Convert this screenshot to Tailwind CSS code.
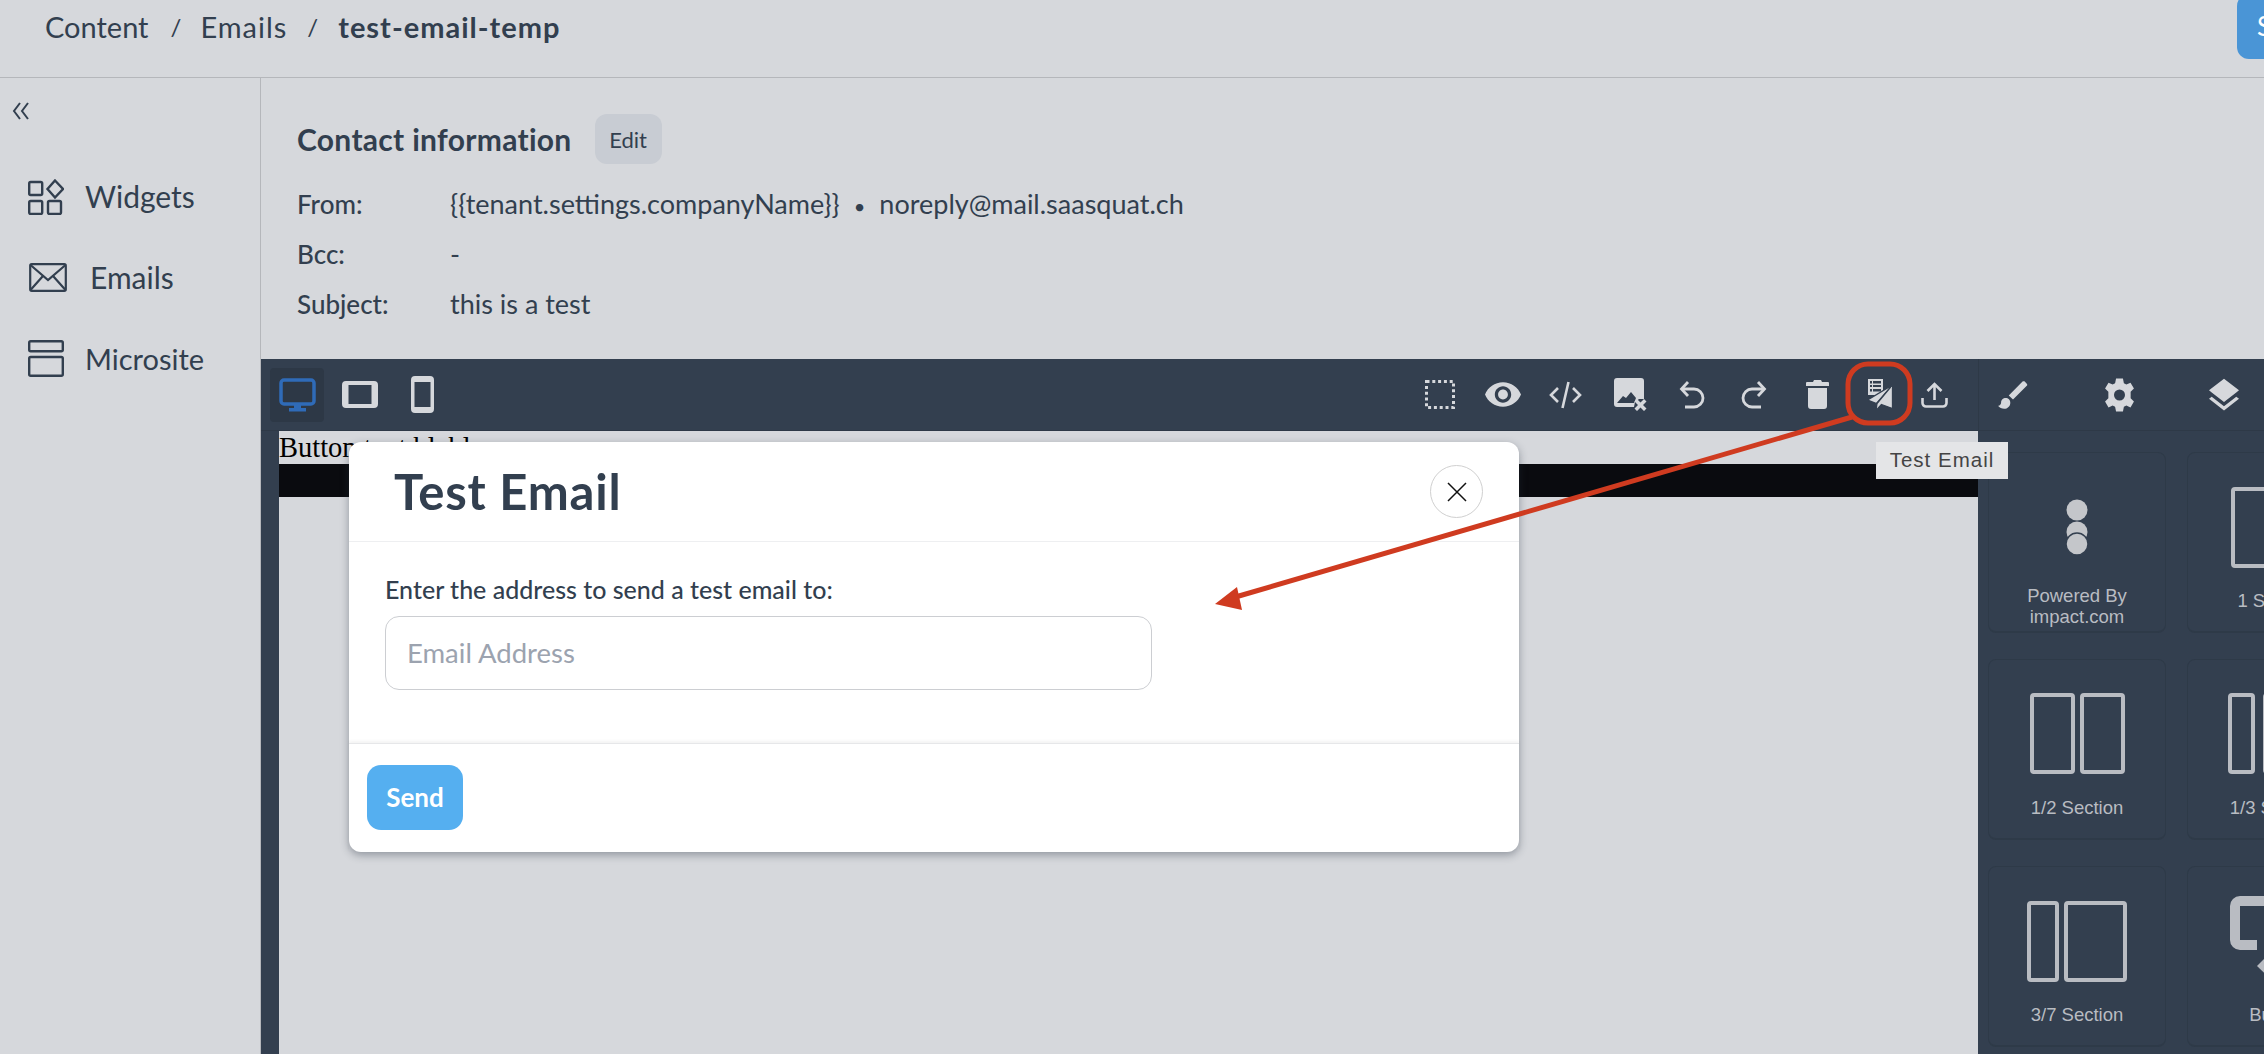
<!DOCTYPE html>
<html lang="en">
<head>
  <meta charset="UTF-8">
  <title>test-email-temp</title>
  <script src="https://cdn.jsdelivr.net/npm/@tailwindcss/browser@4"></script>
</head>
<body class="bg-[#d6d8dc] text-[#323f4f] font-['Lato','Noto_Sans',sans-serif] overflow-hidden">
  <div class="relative w-[2264px] h-[1054px] overflow-hidden">

    <!-- top bar -->
    <header class="h-[78px] border-b border-[#b5b7bb] flex items-start pl-[45px] overflow-hidden">
      <nav class="flex items-center h-[54px] text-[29px]">
        <span>Content</span>
        <span class="ml-[22px] text-[24px]">/</span>
        <span class="ml-[19px] tracking-[1px]">Emails</span>
        <span class="ml-[20px] text-[24px]">/</span>
        <span class="ml-[20px] font-bold tracking-[1px]">test-email-temp</span>
      </nav>
      <button class="ml-auto -mr-[53px] -mt-[6px] h-[65px] w-[80px] shrink-0 rounded-xl bg-[#4a95d6] text-white text-[26px] text-left pl-[20px]">Save</button>
    </header>

    <div class="flex h-[976px]">
      <!-- sidebar -->
      <aside class="w-[261px] shrink-0 border-r border-[#b5b7bb]">
        <svg class="ml-[12px] mt-[24px] w-[18px] h-[18px]" viewBox="0 0 18 18" fill="none" stroke="#323f4f" stroke-width="2"><path d="M8 1 2 9l6 8M16 1l-6 8 6 8"/></svg>
        <ul class="mt-[36px] text-[30px]">
          <li class="flex items-center h-[81px] pl-[28px]">
            <svg class="w-[36px] h-[36px]" viewBox="0 0 36 36" fill="none" stroke="#323f4f" stroke-width="2.4"><rect x="1.2" y="3" width="13" height="13" rx="1.5"/><path d="M27 1.5 35 10l-8 8.5L19.5 10z"/><rect x="1.2" y="22" width="13" height="13" rx="1.5"/><rect x="20" y="22" width="13" height="13" rx="1.5"/></svg>
            <span class="ml-[21px]">Widgets</span>
          </li>
          <li class="flex items-center h-[81px] pl-[29px]">
            <svg class="w-[38px] h-[29px]" viewBox="0 0 38 29" fill="none" stroke="#323f4f" stroke-width="2.2"><rect x="1.2" y="1.2" width="35.6" height="26.6" rx="1.5"/><path d="m1.5 2 17.5 15L36.5 2M1.5 27l12-13.5M36.5 27l-12-13.5"/></svg>
            <span class="ml-[23px]">Emails</span>
          </li>
          <li class="flex items-center h-[81px] pl-[28px]">
            <svg class="w-[36px] h-[37px]" viewBox="0 0 36 37" fill="none" stroke="#323f4f" stroke-width="2.4"><rect x="1.2" y="1.2" width="33.6" height="10" rx="1.5"/><rect x="1.2" y="17" width="33.6" height="18.8" rx="1.5"/></svg>
            <span class="ml-[21px] text-[29px]">Microsite</span>
          </li>
        </ul>
      </aside>

      <main class="flex-1 min-w-0">
        <!-- contact information -->
        <section class="h-[281px] pl-[36px] pt-[36px]">
          <div class="flex items-center h-[50px]">
            <h2 class="text-[30px] font-bold tracking-[0.3px]">Contact information</h2>
            <button class="ml-[23px] w-[67px] h-[50px] rounded-xl bg-[#c8ccd3] text-[22px]">Edit</button>
          </div>
          <dl class="mt-[15px] text-[26px]">
            <div class="flex items-center h-[50px]"><dt class="w-[153px] font-medium">From:</dt><dd class="text-[27px]">{{tenant.settings.companyName}}<span class="mx-[14px] text-[20px]">•</span>noreply@mail.saasquat.ch</dd></div>
            <div class="flex items-center h-[50px]"><dt class="w-[153px] font-medium">Bcc:</dt><dd class="text-[27px]">-</dd></div>
            <div class="flex items-center h-[50px]"><dt class="w-[153px] font-medium">Subject:</dt><dd class="text-[27px]">this is a test</dd></div>
          </dl>
        </section>

        <!-- email editor -->
        <section class="bg-[#333f4f] h-[695px] flex flex-col">
          <div class="h-[72px] shrink-0 flex items-center border-b border-[#2e3947]">
            <div class="ml-[9px] w-[54px] h-[54px] rounded bg-[#2d3846] flex items-center justify-center">
              <svg class="w-[37px] h-[34px]" viewBox="0 0 37 34" fill="none"><rect x="2" y="2" width="33" height="24" rx="3" stroke="#2f6bb8" stroke-width="3.5"/><path d="M15 27h7v3h5v3.5H10V30h5z" fill="#2f6bb8"/></svg>
            </div>
            <svg class="ml-[18px] w-[36px] h-[27px]" viewBox="0 0 36 27" fill="#d6d8dc"><path fill-rule="evenodd" d="M4 0h28a4 4 0 0 1 4 4v19a4 4 0 0 1-4 4H4a4 4 0 0 1-4-4V4a4 4 0 0 1 4-4zM6.500 4v19h23V4z"/></svg>
            <svg class="ml-[33px] w-[23px] h-[37px]" viewBox="0 0 23 37" fill="#d6d8dc"><path fill-rule="evenodd" d="M4 0h15a4 4 0 0 1 4 4v29a4 4 0 0 1-4 4H4a4 4 0 0 1-4-4V4a4 4 0 0 1 4-4zM3.500 6v25h16V6z"/></svg>

            <div class="ml-auto flex items-center mr-[30px]">
              <svg class="w-[30px] h-[29px]" viewBox="0 0 30 29" fill="none" stroke="#d6d8dc" stroke-width="3" stroke-dasharray="3 2.8"><rect x="1.5" y="1.5" width="27" height="26"/></svg>
              <svg class="ml-[30px] w-[36px] h-[25px]" viewBox="1 4.5 22 15" fill="#d6d8dc"><path d="M12 4.5C7 4.5 2.73 7.61 1 12c1.73 4.39 6 7.5 11 7.5s9.27-3.11 11-7.5c-1.73-4.39-6-7.5-11-7.5zM12 17c-2.76 0-5-2.24-5-5s2.24-5 5-5 5 2.24 5 5-2.24 5-5 5zm0-8c-1.66 0-3 1.34-3 3s1.34 3 3 3 3-1.34 3-3-1.34-3-3-3z"/></svg>
              <svg class="ml-[28px] w-[33px] h-[28px]" viewBox="0 0 33 28" fill="none" stroke="#d6d8dc" stroke-width="2.6"><path d="M9 7 2 14l7 7M24 7l7 7-7 7M19.5 1l-6 26"/></svg>
              <svg class="ml-[32px] w-[34px] h-[33px]" viewBox="0 0 34 33" fill="#d6d8dc"><path fill-rule="evenodd" d="M3 0h24a3 3 0 0 1 3 3v18h-5l-4 3-1 5H3a3 3 0 0 1-3-3V3a3 3 0 0 1 3-3zM3 25l6-7 3 2 5-6 5 6-2 5z"/><path d="m23 21 3.500 3.500L30 21l2.500 2.500L29 27l3.500 3.500L30 33l-3.500-3.500L23 33l-2.500-2.500L24 27l-3.500-3.500z"/></svg>
              <svg class="ml-[31px] w-[26px] h-[29px]" viewBox="0 0 26 29" fill="none" stroke="#d6d8dc" stroke-width="2.8"><path d="M9 2 2.500 9 9 16"/><path d="M3 9h12a9 9 0 0 1 0 18H6"/></svg>
              <svg class="ml-[36px] w-[26px] h-[29px]" viewBox="0 0 26 29" fill="none" stroke="#d6d8dc" stroke-width="2.8"><path d="m17 2 6.500 7L17 16"/><path d="M23 9H11a9 9 0 0 0 0 18h9"/></svg>
              <svg class="ml-[39px] w-[23px] h-[29px]" viewBox="0 0 23 29" fill="#d6d8dc"><path d="M8 0h7l1 2h6a1 1 0 0 1 1 1v3H0V3a1 1 0 0 1 1-1h6zM2 8h19v18a3 3 0 0 1-3 3H5a3 3 0 0 1-3-3z"/></svg>
              <svg class="ml-[39px] w-[24px] h-[31px]" viewBox="0 0 24 31"><path fill="#d6d8dc" fill-rule="evenodd" d="M0 0h15v16H0zM2 2v2.500h2V2zM5 2v2.500h8V2zM2 6v2h2V6zM5 6v2h8V6zM2 10v2.500h2V10zM5 10v2.500h8V10z"/><path fill="#d6d8dc" stroke="#333f4f" stroke-width="1.300" stroke-linejoin="round" d="M24.500 6 -.5 21l9 3.500z"/><path fill="#d6d8dc" stroke="#333f4f" stroke-width="1.300" stroke-linejoin="round" d="M24.500 6 9 24.500 8 31.500l5.500-6 11 4z"/></svg>
              <svg class="ml-[29px] w-[27px] h-[26px]" viewBox="0 0 27 26" fill="none" stroke="#d6d8dc" stroke-width="2.6"><path d="M13.500 18V2M6.500 9l7-7 7 7M1.500 16v5a3.500 3.500 0 0 0 3.500 3.500h17a3.500 3.500 0 0 0 3.500-3.500v-5"/></svg>
            </div>

            <div class="w-[286px] shrink-0 h-full flex items-center border-l border-[#2e3947]">
              <svg class="ml-[19px] w-[30px] h-[30px]" viewBox="2 3 19.5 18" fill="#d6d8dc"><path d="M7 14c-1.66 0-3 1.34-3 3 0 1.31-1.16 2-2 2 .92 1.22 2.49 2 4 2 2.21 0 4-1.790 4-4 0-1.66-1.34-3-3-3zm13.71-9.37-1.34-1.34c-.39-.39-1.02-.39-1.41 0L9 12.25 11.75 15l8.96-8.96c.39-.39.39-1.03 0-1.41z"/></svg>
              <svg class="ml-[75px] w-[33px] h-[34px]" viewBox="0 0 24 24" fill="#d6d8dc"><path fill-rule="evenodd" d="M9.500 0h5l.7 3.400 1.800.9L20 3l2.500 4.300-2.400 2.300v4.800l2.400 2.300L20 21l-3-1.300-1.800.9-.7 3.400h-5l-.7-3.400-1.800-.9L4 21l-2.500-4.300 2.400-2.300V9.600L1.500 7.300 4 3l3 1.300 1.800-.9zM12 8a4 4 0 1 0 0 8 4 4 0 0 0 0-8z"/></svg>
              <svg class="ml-[73px] w-[30px] h-[33px]" viewBox="3 2 18 19" fill="#d6d8dc"><path d="m11.990 18.540-7.370-5.730L3 14.070l9 7 9-7-1.630-1.270-7.380 5.740zM12 16l7.360-5.730L21 9l-9-7-9 7 1.630 1.270L12 16z"/></svg>
            </div>
          </div>

          <div class="flex flex-1 min-h-0">
            <div class="w-[18px] shrink-0"></div>
            <!-- email preview -->
            <div class="flex-1 min-w-0 bg-[#d6d8dc] overflow-hidden">
              <p class="font-['Liberation_Serif',serif] text-[28.500px] leading-[33px] text-black">Button text blabla</p>
              <div class="h-[33px] bg-[#0a0b0f]"></div>
            </div>
            <!-- blocks -->
            <div class="w-[286px] shrink-0 overflow-hidden pl-[10px] pt-[21px] font-['Liberation_Sans',sans-serif] text-[18.500px] leading-[21px] text-[#b9bcc2]">
              <div class="grid grid-cols-[178px_178px] gap-x-[21px] gap-y-[26px] auto-rows-[181px]">
                <div class="rounded-lg border border-[#2e3a48] border-b-2 flex flex-col items-center text-center">
                  <svg class="mt-[46px] w-[24px] h-[58px]" viewBox="0 0 24 58"><circle cx="12" cy="11" r="10.5" fill="#c4c6ca"/><circle cx="12" cy="33" r="10.5" fill="#c4c6ca"/><circle cx="12" cy="45" r="11" fill="#c4c6ca" stroke="#333f4f" stroke-width="1.5"/></svg>
                  <div class="mt-[28px]">Powered By<br>impact.com</div>
                </div>
                <div class="rounded-lg border border-[#2e3a48] border-b-2 flex flex-col items-center text-center">
                  <div class="mt-[34px] w-[90px] h-[81px] rounded border-4 border-[#b9bcc2] shrink-0"></div>
                  <div class="mt-[22px]">1 Section</div>
                </div>
                <div class="rounded-lg border border-[#2e3a48] border-b-2 flex flex-col items-center text-center">
                  <div class="mt-[33px] flex gap-[5px]">
                    <div class="w-[45px] h-[81px] rounded border-4 border-[#b9bcc2]"></div>
                    <div class="w-[45px] h-[81px] rounded border-4 border-[#b9bcc2]"></div>
                  </div>
                  <div class="mt-[23px]">1/2 Section</div>
                </div>
                <div class="rounded-lg border border-[#2e3a48] border-b-2 flex flex-col items-center text-center">
                  <div class="mt-[33px] flex gap-[8px]">
                    <div class="w-[27px] h-[81px] rounded border-4 border-[#b9bcc2]"></div>
                    <div class="w-[27px] h-[81px] rounded border-4 border-[#b9bcc2]"></div>
                    <div class="w-[27px] h-[81px] rounded border-4 border-[#b9bcc2]"></div>
                  </div>
                  <div class="mt-[23px]">1/3 Section</div>
                </div>
                <div class="rounded-lg border border-[#2e3a48] border-b-2 flex flex-col items-center text-center">
                  <div class="mt-[34px] flex gap-[5px]">
                    <div class="w-[32px] h-[81px] rounded border-4 border-[#b9bcc2]"></div>
                    <div class="w-[63px] h-[81px] rounded border-4 border-[#b9bcc2]"></div>
                  </div>
                  <div class="mt-[22px]">3/7 Section</div>
                </div>
                <div class="rounded-lg border border-[#2e3a48] border-b-2 flex flex-col items-center text-center">
                  <svg class="mt-[29px] w-[92px] h-[88px]" viewBox="0 0 92 88" fill="none" stroke="#b9bcc2" stroke-width="10"><path d="M27 49H10a5 5 0 0 1-5-5V10a5 5 0 0 1 5-5h72a5 5 0 0 1 5 5v34a5 5 0 0 1-5 5H65"/><path d="m27 70 19-19 19 19-19 18z" fill="#b9bcc2" stroke="none"/></svg>
                  <div class="mt-[20px]">Button</div>
                </div>
              </div>
            </div>
          </div>
        </section>
      </main>
    </div>

    <!-- test email modal -->
    <div class="absolute left-[349px] top-[442px] w-[1170px] h-[410px] bg-white rounded-xl shadow-[0_3px_9px_rgba(40,50,65,0.4)] flex flex-col">
      <div class="h-[100px] shrink-0 border-b border-[#eeeff1] flex items-center justify-between pl-[45px] pr-[36px]">
        <h1 class="text-[49px] font-bold tracking-[0.8px]">Test Email</h1>
        <button class="w-[53px] h-[53px] rounded-full border border-[#d0d0d0] flex items-center justify-center">
          <svg class="w-[20px] h-[20px]" viewBox="0 0 20 20" fill="none" stroke="#111" stroke-width="1.5"><path d="m1 1 18 18M19 1 1 19"/></svg>
        </button>
      </div>
      <div class="flex-1 pl-[36px] pt-[33px]">
        <label class="block text-[25px] font-medium leading-[28px]">Enter the address to send a test email to:</label>
        <input type="text" placeholder="Email Address" class="mt-[13px] w-[767px] h-[74px] rounded-[14px] border border-[#ccced2] pl-[21px] pb-[2px] text-[27.500px] placeholder:text-[#9ca3af]">
      </div>
      <div class="h-[109px] shrink-0 border-t border-[#e6e7e9] shadow-[0_-2px_3px_rgba(0,0,0,0.05)] pl-[18px] pt-[21px]">
        <button class="w-[96px] h-[65px] rounded-[14px] bg-[#55aff0] text-white text-[26px] font-bold">Send</button>
      </div>
    </div>

    <!-- tooltip -->
    <div class="absolute left-[1876px] top-[442px] w-[132px] h-[37px] bg-[#e4e5e7] flex items-center justify-center font-['Liberation_Sans',sans-serif] text-[20.500px] tracking-[1px] text-[#444]">Test Email</div>

    <!-- annotation -->
    <svg class="absolute inset-0 pointer-events-none" width="2264" height="1054" viewBox="0 0 2264 1054" fill="none">
      <rect x="1848" y="364" width="62" height="59" rx="20" stroke="#cf3b20" stroke-width="5"/>
      <path d="M1852 417 1232 598" stroke="#cf3b20" stroke-width="5"/>
      <path d="m1215 604 22-17 5 23z" fill="#cf3b20"/>
    </svg>
  </div>
</body>
</html>
